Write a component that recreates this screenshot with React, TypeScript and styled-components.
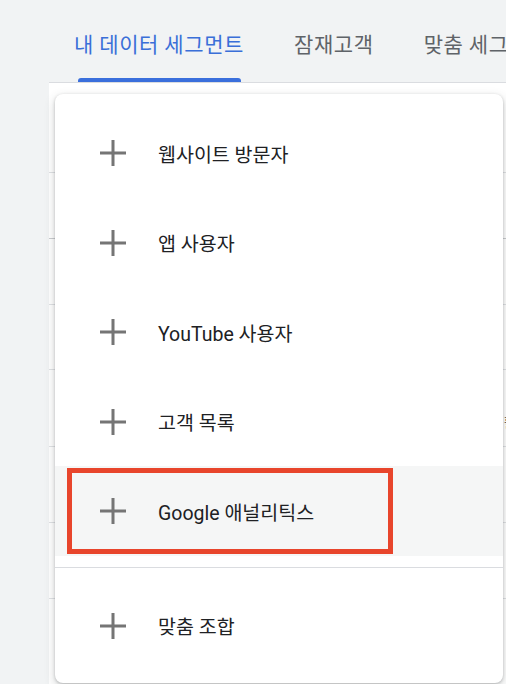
import React from "react";
import styled, { createGlobalStyle } from "styled-components";

const GlobalStyle = createGlobalStyle`
  html, body {
    margin: 0;
    padding: 0;
    background: #f1f3f4;
    font-family: Roboto, "Noto Sans CJK KR", sans-serif;
    -webkit-font-smoothing: antialiased;
  }
`;

const Page = styled.div`
  position: relative;
  width: 506px;
  height: 684px;
  overflow: hidden;
  background: #f1f3f4;
`;

const TabBar = styled.div`
  display: flex;
  gap: 50px;
  height: 82px;
  padding-left: 74px;
  white-space: nowrap;
`;

const Tab = styled.div<{ $active?: boolean }>`
  position: relative;
  display: flex;
  align-items: center;
  padding-top: 3px;
  box-sizing: border-box;
  height: 82px;
  font-family: "Noto Sans CJK KR", Roboto, sans-serif;
  font-size: 21px;
  letter-spacing: 0.6px;
  color: ${(p) => (p.$active ? "#3a6fd8" : "#5f6368")};

  &::after {
    content: "";
    display: ${(p) => (p.$active ? "block" : "none")};
    position: absolute;
    left: 4px;
    right: 3px;
    bottom: 0;
    height: 4px;
    border-radius: 3px 3px 0 0;
    background: #3a6fdc;
  }
`;

const Panel = styled.div`
  margin-left: 49px;
  background: #ffffff;
  border-top: 1px solid #dadce0;
  height: 602px;
  display: flex;
  flex-direction: column;
`;

const TableRow = styled.div<{ $h: number; $strong?: boolean }>`
  flex: none;
  height: ${(p) => p.$h}px;
  border-bottom: 1px solid ${(p) => (p.$strong ? "#c9cbce" : "#dfe1e4")};
  display: flex;
  align-items: center;
`;

const PeekText = styled.span`
  padding-left: 455px;
  padding-top: 26px;
  font-size: 13px;
  color: #3c4043;
  white-space: nowrap;
`;

const Menu = styled.div`
  position: absolute;
  left: 55px;
  top: 93.5px;
  width: 448px;
  height: 589.75px;
  box-sizing: border-box;
  padding: 14.75px 0 13px;
  background: #ffffff;
  border-radius: 8px;
  box-shadow: 0 1px 3px rgba(60, 64, 67, 0.3), 0 4px 10px 2px rgba(60, 64, 67, 0.15);
  display: flex;
  flex-direction: column;
`;

const Item = styled.div<{ $hover?: boolean }>`
  position: relative;
  flex: none;
  height: 89.5px;
  display: flex;
  align-items: center;
  gap: 32px;
  padding-left: 45px;
  background: ${(p) => (p.$hover ? "#f5f6f6" : "transparent")};
  font-size: 19.5px;
  color: #202124;
  white-space: nowrap;
`;

const Highlight = styled.div`
  position: absolute;
  left: 12px;
  top: 2px;
  width: 326px;
  height: 86px;
  box-sizing: border-box;
  border: 5px solid #e8452c;
`;

const Divider = styled.div`
  flex: none;
  height: 1px;
  background: #dadce0;
  margin: 11.5px 0 12.5px;
`;

const PlusIcon = () => (
  <svg width="26" height="26" viewBox="0 0 26 26" style={{ flex: "none" }}>
    <rect x="0" y="11.5" width="26" height="3" fill="#757575" />
    <rect x="11.5" y="0" width="3" height="26" fill="#757575" />
  </svg>
);

const items = ["웹사이트 방문자", "앱 사용자", "YouTube 사용자", "고객 목록", "Google 애널리틱스"];

const rows: { h: number; strong?: boolean }[] = [
  { h: 89 },
  { h: 65, strong: true },
  { h: 65 },
  { h: 64 },
  { h: 76 },
  { h: 75 },
  { h: 75 },
];

export default function App() {
  return (
    <Page>
      <GlobalStyle />
      <TabBar>
        <Tab $active>내 데이터 세그먼트</Tab>
        <Tab>잠재고객</Tab>
        <Tab>맞춤 세그먼트</Tab>
      </TabBar>
      <Panel>
        {rows.map((r, i) => (
          <TableRow key={i} $h={r.h} $strong={r.strong}>
            {i === 4 && <PeekText>활성</PeekText>}
          </TableRow>
        ))}
      </Panel>
      <Menu>
        {items.map((label, i) => (
          <Item key={label} $hover={i === 4}>
            <PlusIcon />
            <span>{label}</span>
            {i === 4 && <Highlight />}
          </Item>
        ))}
        <Divider />
        <Item>
          <PlusIcon />
          <span>맞춤 조합</span>
        </Item>
      </Menu>
    </Page>
  );
}
